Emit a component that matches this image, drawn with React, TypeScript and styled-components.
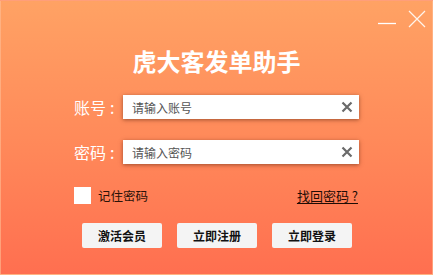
import React from 'react';
import styled, { createGlobalStyle } from 'styled-components';

const GlobalStyle = createGlobalStyle`
  html, body {
    margin: 0;
    padding: 0;
  }
  body {
    font-family: "Noto Sans CJK SC", "Microsoft YaHei", sans-serif;
  }
`;

const Window = styled.div`
  width: 433px;
  height: 275px;
  box-sizing: border-box;
  display: flex;
  flex-direction: column;
  background: linear-gradient(180deg, #ffa264 0%, #ff8a5a 50%, #ff6f50 100%);
  border: 1px solid rgba(255, 190, 150, 0.6);
`;

const TitleBar = styled.div`
  height: 39px;
  display: flex;
  justify-content: flex-end;
  align-items: flex-start;
  gap: 12px;
  padding-right: 6px;
`;

const WinButton = styled.button`
  width: 18px;
  height: 24px;
  padding: 0;
  border: 0;
  background: none;
  display: flex;
  align-items: center;
  justify-content: center;
  cursor: pointer;
  margin-top: 6px;
`;

const Title = styled.h1`
  margin: 6px 0 0;
  height: 30px;
  line-height: 30px;
  text-align: center;
  color: #ffffff;
  font-size: 24px;
  font-weight: 700;
`;

const Field = styled.div<{ $top: number }>`
  display: flex;
  align-items: center;
  margin-top: ${(p) => p.$top}px;
  padding-left: 73px;
`;

const Label = styled.label`
  width: 49px;
  color: #ffffff;
  font-size: 16px;
  line-height: 24px;
  white-space: nowrap;
`;

const Colon = styled.span`
  margin-left: 4px;
`;

const InputBox = styled.div`
  width: 236px;
  height: 24px;
  box-sizing: border-box;
  display: flex;
  align-items: center;
  background: #ffffff;
  box-shadow: 0 1px 4px rgba(80, 30, 10, 0.55);
  padding: 0 6px 0 9px;
`;

const Input = styled.input`
  flex: 1;
  min-width: 0;
  border: 0;
  outline: none;
  padding: 0;
  font-family: inherit;
  font-size: 12px;
  color: #333;
  background: transparent;
  &::placeholder {
    color: #555555;
  }
`;

const ClearIcon = styled.svg`
  width: 12px;
  height: 12px;
  flex-shrink: 0;
`;

const Options = styled.div`
  display: flex;
  align-items: center;
  justify-content: space-between;
  margin: 22px 74px 0 73px;
`;

const Remember = styled.label`
  display: flex;
  align-items: center;
  gap: 7px;
  color: #2a1208;
  font-size: 12.5px;
`;

const Check = styled.span`
  width: 17px;
  height: 17px;
  background: #ffffff;
  display: inline-block;
`;

const Forgot = styled.a`
  color: #1e0c05;
  font-size: 13px;
  text-decoration: underline;
  text-underline-offset: 2px;
  cursor: pointer;
`;

const Actions = styled.div`
  display: flex;
  justify-content: center;
  gap: 15px;
  margin-top: 18px;
  padding-left: 1px;
`;

const ActionButton = styled.button`
  width: 80px;
  height: 25px;
  border: 0;
  border-radius: 2px;
  background: #f4f4f4;
  color: #111111;
  font-family: inherit;
  font-size: 12px;
  font-weight: 700;
  cursor: pointer;
`;

const Clear = () => (
  <ClearIcon viewBox="0 0 12 12">
    <path d="M1.5 1.5 L10.5 10.5 M10.5 1.5 L1.5 10.5" stroke="#6a6a6a" strokeWidth="2.2" />
  </ClearIcon>
);

const App = (): React.ReactElement => {
  return (
    <>
      <GlobalStyle />
      <Window>
        <TitleBar>
          <WinButton aria-label="minimize">
            <svg width="18" height="24" viewBox="0 0 18 24">
              <path d="M0 16.5 H18" stroke="#ffffff" strokeWidth="1.3" />
            </svg>
          </WinButton>
          <WinButton aria-label="close">
            <svg width="18" height="18" viewBox="0 0 18 18">
              <path d="M1 1 L17 17 M17 1 L1 17" stroke="#fff4ec" strokeWidth="1.2" />
            </svg>
          </WinButton>
        </TitleBar>
        <Title>虎大客发单助手</Title>
        <Field $top={19}>
          <Label>账号<Colon>:</Colon></Label>
          <InputBox>
            <Input placeholder="请输入账号" />
            <Clear />
          </InputBox>
        </Field>
        <Field $top={21}>
          <Label>密码<Colon>:</Colon></Label>
          <InputBox>
            <Input type="password" placeholder="请输入密码" />
            <Clear />
          </InputBox>
        </Field>
        <Options>
          <Remember>
            <Check />
            记住密码
          </Remember>
          <Forgot>找回密码 ?</Forgot>
        </Options>
        <Actions>
          <ActionButton>激活会员</ActionButton>
          <ActionButton>立即注册</ActionButton>
          <ActionButton>立即登录</ActionButton>
        </Actions>
      </Window>
    </>
  );
};

export default App;
